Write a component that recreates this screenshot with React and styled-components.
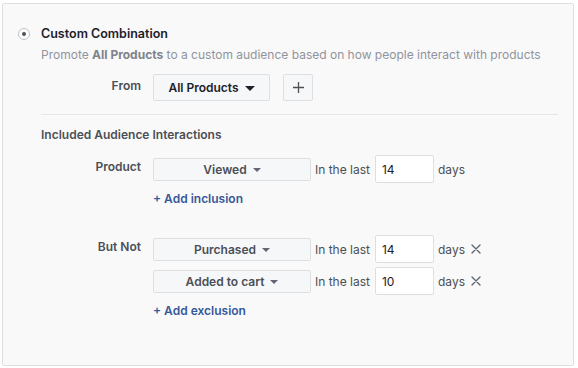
import React from "react";
import styled, { createGlobalStyle } from "styled-components";

const Global = createGlobalStyle`
  html, body { margin: 0; padding: 0; background: #ffffff; }
  body { font-family: Inter, "Liberation Sans", Arial, sans-serif; -webkit-font-smoothing: antialiased; }
`;

const Panel = styled.div`
  box-sizing: border-box;
  margin: 3px 0 0 2px;
  width: 572px;
  height: 363px;
  border: 1px solid #dddfe2;
  border-radius: 2px;
  background: #f9f9fa;
  padding: 22px 14px 0 14px;
  display: grid;
  grid-template-columns: 24px 1fr;
  align-items: start;
`;

const Radio = styled.span`
  box-sizing: border-box;
  width: 12px;
  height: 12px;
  margin: 2px 0 0 1px;
  border-radius: 50%;
  border: 1px solid #bec3c9;
  background: #fff;
  display: flex;
  align-items: center;
  justify-content: center;
  &::after {
    content: "";
    width: 4px;
    height: 4px;
    border-radius: 50%;
    background: #4b4f56;
  }
`;

const Content = styled.div`
  display: flex;
  flex-direction: column;
`;

const Title = styled.div`
  font-size: 12.5px;
  font-weight: 600;
  color: #1d2129;
  line-height: 16px;
`;

const Desc = styled.div`
  margin-top: 5px;
  font-size: 12px;
  color: #90949c;
  line-height: 16px;
  white-space: nowrap;
  b { font-weight: 700; color: #7f838b; }
`;

const FormGrid = styled.div`
  display: grid;
  grid-template-columns: 100px 1fr;
  column-gap: 12px;
  align-items: start;
`;

const Label = styled.div`
  text-align: right;
  font-size: 12px;
  font-weight: 600;
  color: #4b4f56;
  line-height: 16px;
  padding-top: ${p => p.$pt || 0}px;
`;

const FromRow = styled(FormGrid)`
  margin-top: 11px;
`;

const Controls = styled.div`
  display: flex;
  align-items: center;
  gap: 13px;
`;

const Dropdown = styled.div`
  box-sizing: border-box;
  height: ${p => p.$h || 27}px;
  width: ${p => p.$w}px;
  border: 1px solid #dddfe2;
  border-radius: 2px;
  background: #f6f7f9;
  display: flex;
  align-items: center;
  justify-content: center;
  gap: 6px;
  font-size: 12px;
  font-weight: 600;
  color: ${p => p.$dark ? "#1d2129" : "#4b4f56"};
`;

const Caret = styled.span`
  width: 0;
  height: 0;
  border-left: ${p => p.$s}px solid transparent;
  border-right: ${p => p.$s}px solid transparent;
  border-top: ${p => p.$s}px solid ${p => p.$c || "#4b4f56"};
  margin-top: 1px;
`;

const PlusButton = styled.div`
  box-sizing: border-box;
  width: 30px;
  height: 27px;
  border: 1px solid #dddfe2;
  border-radius: 2px;
  background: #f6f7f9;
  display: flex;
  align-items: center;
  justify-content: center;
`;

const Divider = styled.div`
  margin-top: 13px;
  height: 1px;
  background: #e5e6e9;
  width: 517px;
`;

const Heading = styled.div`
  margin-top: 12px;
  font-size: 12px;
  font-weight: 600;
  color: #4b4f56;
  line-height: 16px;
`;

const Section = styled(FormGrid)`
  margin-top: ${p => p.$mt}px;
`;

const Stack = styled.div`
  display: flex;
  flex-direction: column;
  gap: 4px;
`;

const InteractionRow = styled.div`
  display: flex;
  align-items: center;
  height: 28px;
`;

const Text = styled.span`
  font-size: 12px;
  color: #4b4f56;
  margin: 0 ${p => p.$mr || 5}px 0 ${p => p.$ml || 4}px;
  white-space: nowrap;
`;

const NumInput = styled.div`
  box-sizing: border-box;
  width: 59px;
  height: 28px;
  border: 1px solid #dddfe2;
  border-radius: 2px;
  background: #fff;
  display: flex;
  align-items: center;
  padding-left: 6px;
  font-size: 12px;
  color: #1d2129;
`;

const Remove = styled.svg`
  width: 10px;
  height: 10px;
  margin-left: 1px;
`;

const AddLink = styled.div`
  margin-top: ${p => p.$mt || 8}px;
  font-size: 12px;
  font-weight: 600;
  color: #365899;
  line-height: 16px;
`;

function Row({ action, value, removable }) {
  return (
    <InteractionRow>
      <Dropdown $w={158} $h={23}>
        {action} <Caret $s={4} $c="#606770" />
      </Dropdown>
      <Text>In the last</Text>
      <NumInput>{value}</NumInput>
      <Text>days</Text>
      {removable && (
        <Remove viewBox="0 0 10 10">
          <path d="M1 1L9 9M9 1L1 9" stroke="#606770" strokeWidth="1.4" strokeLinecap="round" />
        </Remove>
      )}
    </InteractionRow>
  );
}

export default function App() {
  return (
    <>
      <Global />
      <Panel>
        <Radio />
        <Content>
          <Title>Custom Combination</Title>
          <Desc>
            Promote <b>All Products</b> to a custom audience based on how people interact with products
          </Desc>
          <FromRow>
            <Label $pt={4}>From</Label>
            <Controls>
              <Dropdown $w={117} $dark>
                All Products <Caret $s={5} $c="#1d2129" />
              </Dropdown>
              <PlusButton>
                <svg width="13" height="13" viewBox="0 0 13 13">
                  <path d="M6.5 1V12M1 6.5H12" stroke="#4b4f56" strokeWidth="1.3" />
                </svg>
              </PlusButton>
            </Controls>
          </FromRow>
          <Divider />
          <Heading>Included Audience Interactions</Heading>
          <Section $mt={12}>
            <Label $pt={4}>Product</Label>
            <Stack>
              <Row action="Viewed" value="14" />
              <AddLink $mt={4}>+ Add inclusion</AddLink>
            </Stack>
          </Section>
          <Section $mt={28}>
            <Label $pt={4}>But Not</Label>
            <Stack>
              <Row action="Purchased" value="14" removable />
              <Row action="Added to cart" value="10" removable />
              <AddLink $mt={4}>+ Add exclusion</AddLink>
            </Stack>
          </Section>
        </Content>
      </Panel>
    </>
  );
}
